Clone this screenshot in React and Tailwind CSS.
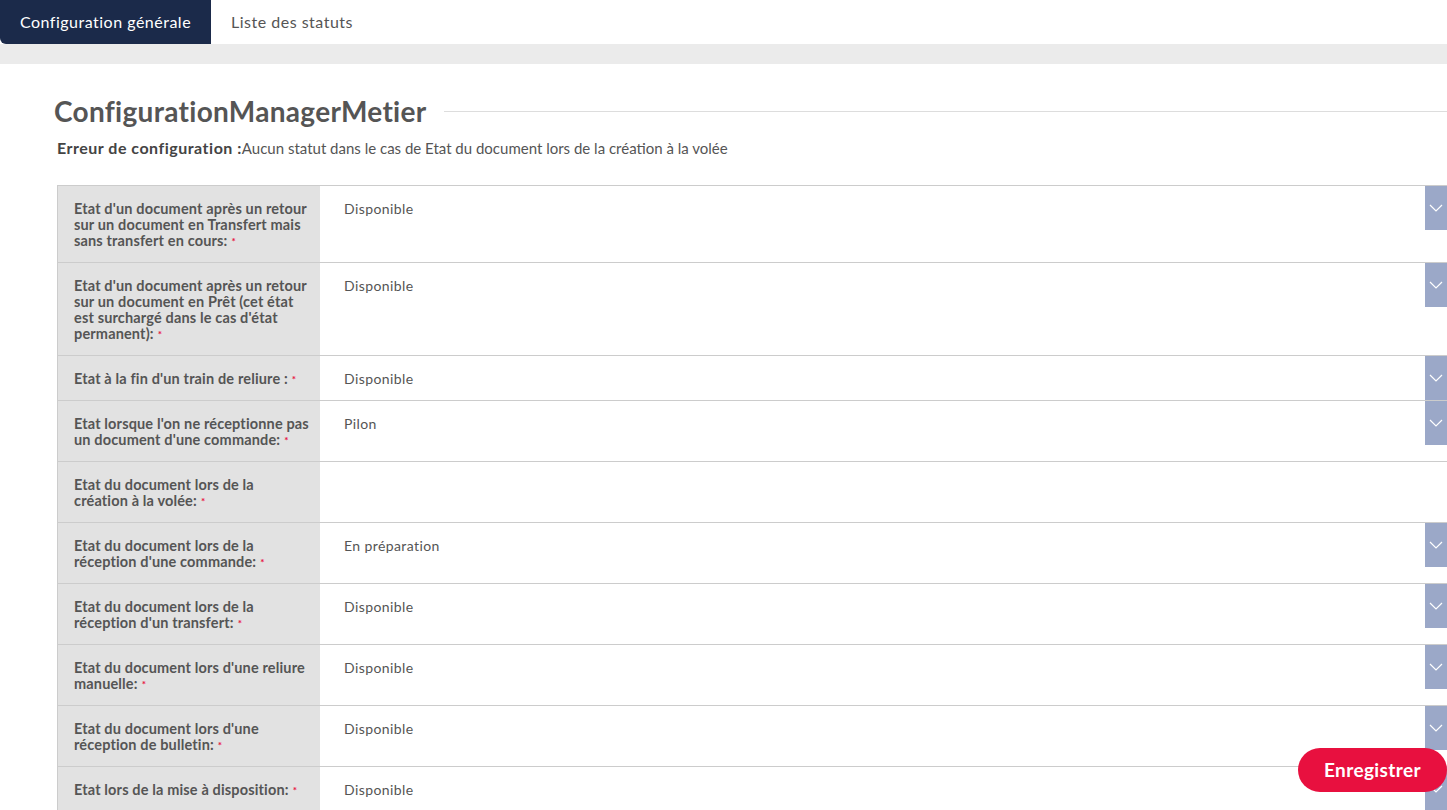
const rows = [
  { label: "Etat d'un document après un retour sur un document en Transfert mais sans transfert en cours:", value: 'Disponible' },
  { label: "Etat d'un document après un retour sur un document en Prêt (cet état est surchargé dans le cas d'état permanent):", value: 'Disponible' },
  { label: "Etat à la fin d'un train de reliure :", value: 'Disponible' },
  { label: "Etat lorsque l'on ne réceptionne pas un document d'une commande:", value: 'Pilon' },
  { label: 'Etat du document lors de la création à la volée:', value: null },
  { label: "Etat du document lors de la réception d'une commande:", value: 'En préparation' },
  { label: "Etat du document lors de la réception d'un transfert:", value: 'Disponible' },
  { label: "Etat du document lors d'une reliure manuelle:", value: 'Disponible' },
  { label: "Etat du document lors d'une réception de bulletin:", value: 'Disponible' },
  { label: 'Etat lors de la mise à disposition:', value: 'Disponible' },
  { label: "Etat du document lors d'un retour:", value: 'Disponible' },
];

const Chevron = () => (
  <svg width="14" height="8" viewBox="0 0 14 8" fill="none">
    <path d="M1 1l6 6 6-6" stroke="white" strokeWidth="1.2" />
  </svg>
);

const Row = ({ label, value }) => (
  <div className="flex border-t border-[#cccccc]">
    <div className="w-[262px] shrink-0 bg-[#e2e2e2] pl-4 pr-[9px] pt-[15px] pb-[13px] text-[14.5px] leading-4 font-bold tracking-[0.15px] text-[#555555]">
      {label}
      <span className="text-[#e8103f] text-[10px] align-top ml-1">*</span>
    </div>
    <div className="flex flex-1 justify-between">
      <div className="pl-[24px] pt-[13px] text-[14px] leading-5 tracking-[0.4px] text-[#555555]">{value}</div>
      {value && (
        <div className="flex h-[44px] w-[22px] items-center justify-center bg-[#9ba8c8]">
          <Chevron />
        </div>
      )}
    </div>
  </div>
);

const App = () => {
  return (
    <div className="h-[810px] overflow-hidden bg-white font-['Lato',sans-serif]">
      <div className="flex h-[44px] items-center">
        <div className="flex h-full w-[211px] items-center justify-center rounded-bl-md bg-[#1b2a4a] text-[16px] tracking-[0.5px] text-white">
          Configuration générale
        </div>
        <div className="px-5 text-[16px] tracking-[0.5px] text-[#555555]">Liste des statuts</div>
      </div>
      <div className="h-5 bg-[#ebebeb]" />
      <div className="pl-[57px] pt-[31px]">
        <div className="flex items-center -ml-[3px]">
          <h1 className="text-[28px] leading-8 font-bold tracking-[0.3px] text-[#555555]">ConfigurationManagerMetier</h1>
          <div className="ml-[17px] h-px flex-1 bg-[#dddddd]" />
        </div>
        <div className="mt-[11px] flex h-5 items-baseline text-[#555555]">
          <span className="text-[16px] leading-5 font-bold tracking-[0.5px] text-[#444444]">Erreur de configuration :</span>
          <span className="text-[15px] leading-5">Aucun statut dans le cas de Etat du document lors de la création à la volée</span>
        </div>
        <div className="mt-[27px] border-l border-[#cccccc]">
          {rows.map((r, i) => (
            <Row key={i} {...r} />
          ))}
        </div>
      </div>
      <button className="fixed right-0 bottom-[18px] h-[44px] w-[149px] rounded-full bg-[#e8103f] text-[19px] font-bold tracking-[0.4px] text-white">
        Enregistrer
      </button>
    </div>
  );
};

export default App;
